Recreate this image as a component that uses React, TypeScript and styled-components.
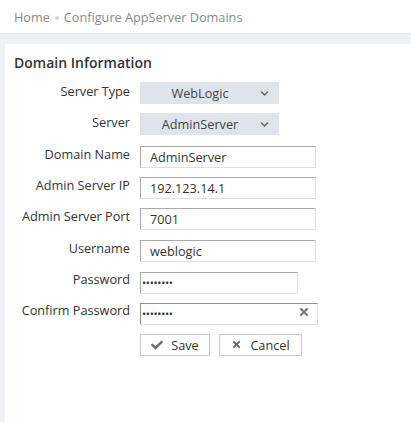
import React from 'react';
import styled, { createGlobalStyle } from 'styled-components';
import { FaCheck, FaTimes, FaChevronDown } from 'react-icons/fa';

const GlobalStyle = createGlobalStyle`
  html, body {
    margin: 0;
    padding: 0;
    background: #edf0f5;
    font-family: "Open Sans", "Liberation Sans", sans-serif;
    color: #333;
  }
`;

const Page = styled.div`
  width: 411px;
  height: 422px;
  display: flex;
  flex-direction: column;
  overflow: hidden;
`;

const Breadcrumb = styled.div`
  height: 33px;
  background: #fff;
  border-bottom: 1px solid #e3e6eb;
  display: flex;
  align-items: center;
  padding-left: 14px;
  font-size: 12.7px;
  color: #888;
`;

const Sep = styled.span`
  display: inline-block;
  width: 4px;
  height: 4px;
  border-radius: 50%;
  background: #d4d4d4;
  margin: 0 5px;
  position: relative;
  top: 1px;
`;

const Card = styled.section`
  flex: 1;
  margin: 10px 0 0 5px;
  background: #fff;
  padding: 10px 0 0 9px;
`;

const Title = styled.h3`
  margin: 0 0 10px;
  font-size: 14px;
  font-weight: 600;
  color: #333;
  line-height: 18px;
`;

const Form = styled.div`
  display: grid;
  grid-template-columns: 116px auto;
  column-gap: 10px;
  row-gap: 9.35px;
  align-items: start;
`;

const Label = styled.label`
  text-align: right;
  font-size: 12.7px;
  line-height: 18px;
  color: #333;
  white-space: nowrap;
`;

const Select = styled.div`
  width: 139px;
  height: 22px;
  background: #dfe3ea;
  display: flex;
  align-items: center;
  font-size: 12.7px;
  color: #444;
  padding-right: 10px;
  box-sizing: border-box;

  span {
    flex: 1;
    text-align: center;
  }

  svg {
    color: #666;
  }
`;

const Field = styled.div<{ $w: number }>`
  position: relative;
  width: ${p => p.$w}px;
  height: 22px;
`;

const Input = styled.input<{ $dots?: boolean; $focus?: boolean }>`
  width: 100%;
  height: 100%;
  box-sizing: border-box;
  border: 1px solid #e0e0e0;
  border-top-color: ${p => (p.$focus ? '#8f8f8f' : '#a9a9a9')};
  border-left-color: ${p => (p.$focus ? '#8f8f8f' : '#a9a9a9')};
  padding: 0 ${p => (p.$dots ? 1 : 9)}px;
  font-family: "Open Sans", "Liberation Sans", sans-serif;
  font-size: ${p => (p.$dots ? 11 : 12.7)}px;
  letter-spacing: ${p => (p.$dots ? '-0.3px' : 'normal')};
  color: #333;
  background: #fff;
  outline: none;
`;

const Clear = styled.span`
  position: absolute;
  right: 8px;
  top: 5px;
  color: #7a7a7a;
  display: flex;
`;

const Buttons = styled.div`
  display: flex;
  gap: 9px;
  margin-top: 1px;
`;

const Button = styled.button<{ $w: number }>`
  width: ${p => p.$w}px;
  height: 22px;
  border: 1px solid #c8c8c8;
  background: #fff;
  display: flex;
  align-items: center;
  justify-content: center;
  gap: 8px;
  font-family: "Open Sans", "Liberation Sans", sans-serif;
  font-size: 12.7px;
  color: #333;
  padding: 0;

  svg {
    color: #6f6f6f;
  }
`;

const dots = '\u2022'.repeat(8);

const App: React.FC = () => {
  return (
    <Page>
      <GlobalStyle />
      <Breadcrumb>
        Home<Sep />Configure AppServer Domains
      </Breadcrumb>
      <Card>
        <Title>Domain Information</Title>
        <Form>
          <Label>Server Type</Label>
          <Select>
            <span>WebLogic</span>
            <FaChevronDown size={9} />
          </Select>

          <Label>Server</Label>
          <Select>
            <span>AdminServer</span>
            <FaChevronDown size={9} />
          </Select>

          <Label>Domain Name</Label>
          <Field $w={176}>
            <Input readOnly value="AdminServer" />
          </Field>

          <Label>Admin Server IP</Label>
          <Field $w={176}>
            <Input readOnly value="192.123.14.1" />
          </Field>

          <Label>Admin Server Port</Label>
          <Field $w={176}>
            <Input readOnly value="7001" />
          </Field>

          <Label>Username</Label>
          <Field $w={176}>
            <Input readOnly value="weblogic" />
          </Field>

          <Label>Password</Label>
          <Field $w={158}>
            <Input readOnly $dots value={dots} />
          </Field>

          <Label>Confirm Password</Label>
          <Field $w={178}>
            <Input readOnly $dots $focus value={dots} />
            <Clear>
              <FaTimes size={12} />
            </Clear>
          </Field>

          <span />
          <Buttons>
            <Button $w={70}>
              <FaCheck size={12} />
              Save
            </Button>
            <Button $w={83}>
              <FaTimes size={11} />
              Cancel
            </Button>
          </Buttons>
        </Form>
      </Card>
    </Page>
  );
};

export default App;
